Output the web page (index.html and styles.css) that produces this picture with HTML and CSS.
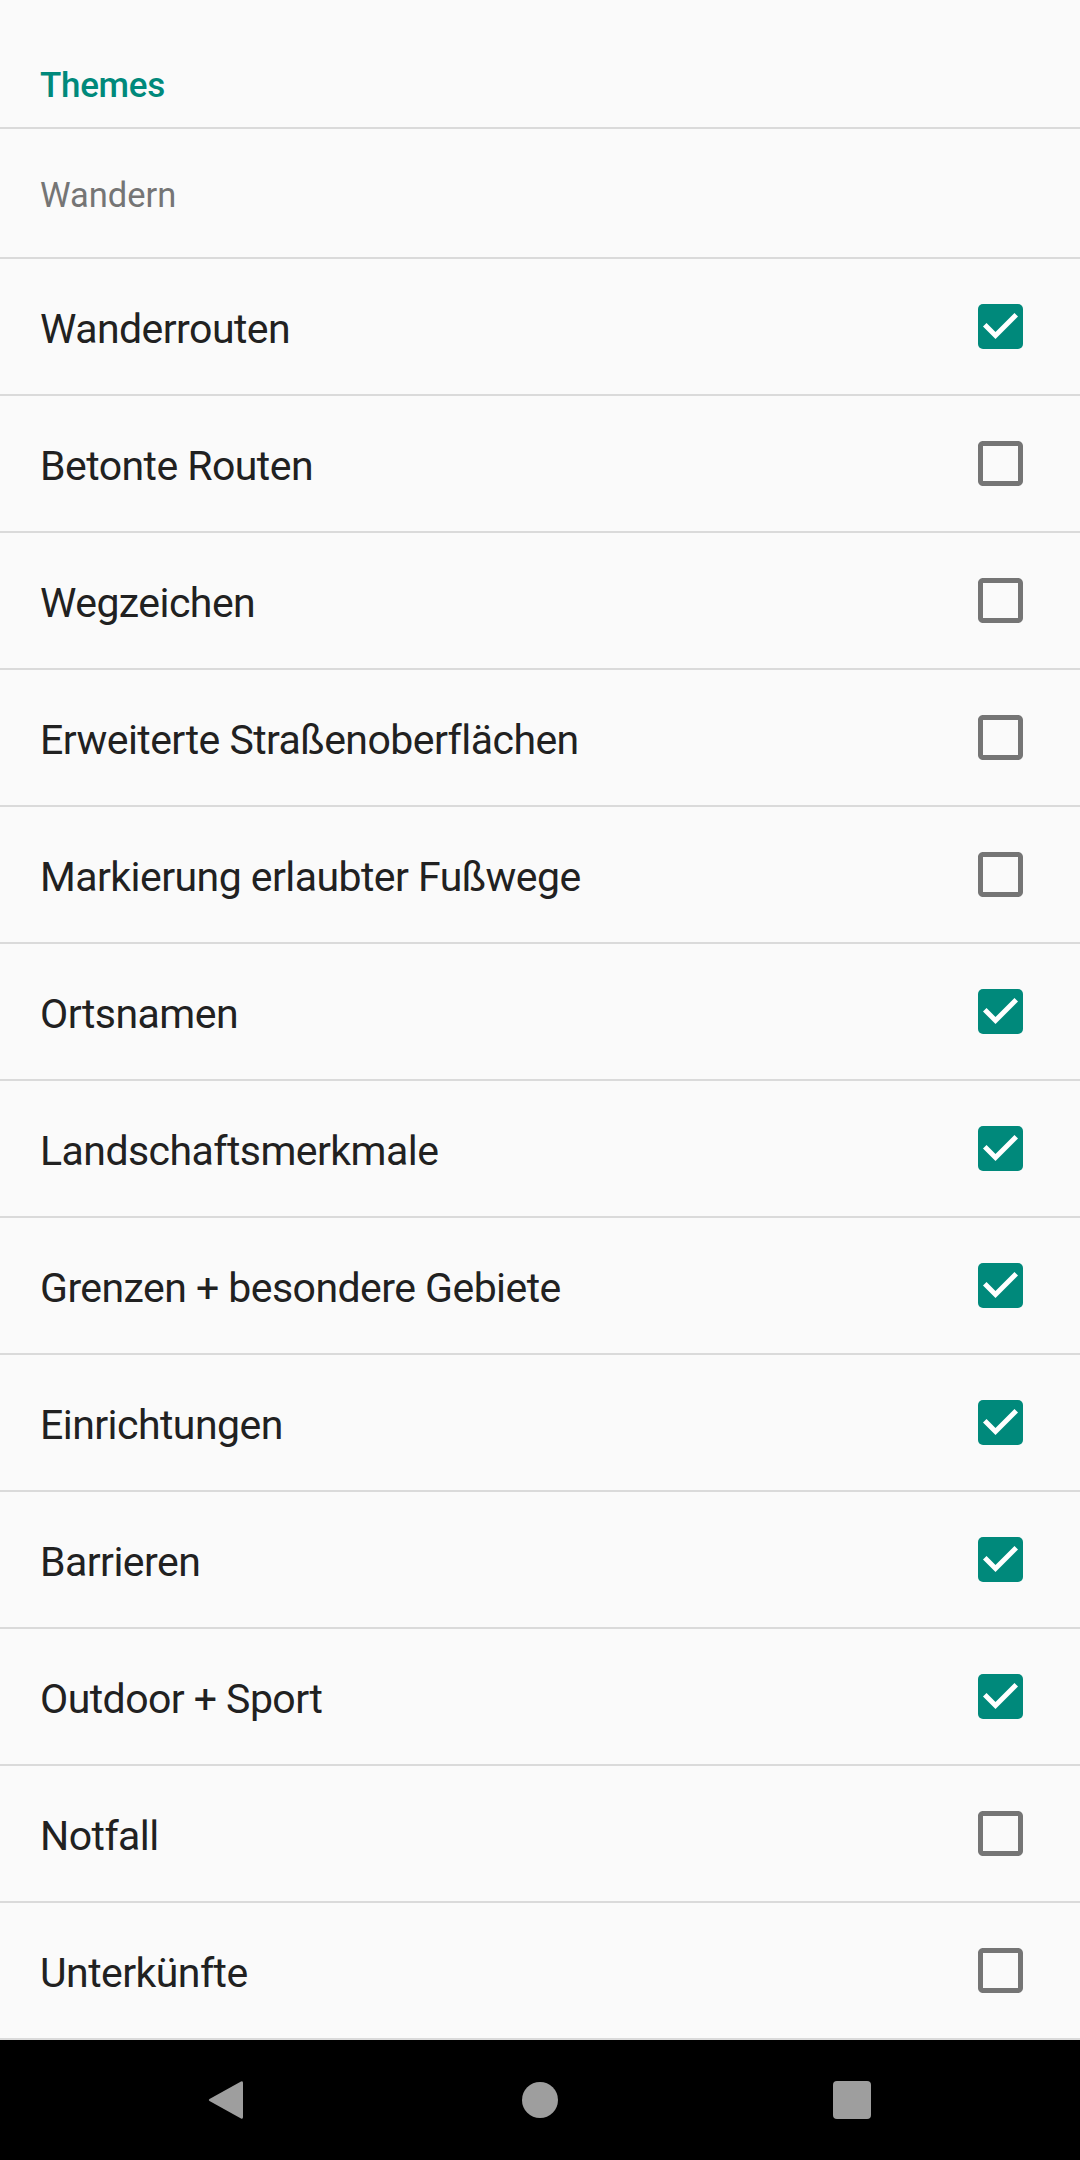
FILE: index.html
```html
<!DOCTYPE html>
<html lang="de">
<head>
<meta charset="utf-8">
<title>Themes</title>
<link rel="stylesheet" href="styles.css">
</head>
<body>
<div class="screen">
  <div class="list">
    <div class="category">Themes</div>
    <div class="subheader">Wandern</div>
    <div class="row"><span class="label">Wanderrouten</span><svg class="cb" viewBox="3 3 18 18"><rect x="3" y="3" width="18" height="18" rx="2" class="on"/><path class="tick" d="M10 17l-5-5 1.41-1.41L10 14.17l7.59-7.59L19 8l-9 9z"/></svg></div>
    <div class="row"><span class="label">Betonte Routen</span><svg class="cb" viewBox="3 3 18 18"><path class="off" d="M19 5v14H5V5h14m0-2H5c-1.11 0-2 .9-2 2v14c0 1.1.89 2 2 2h14c1.1 0 2-.9 2-2V5c0-1.1-.9-2-2-2z"/></svg></div>
    <div class="row"><span class="label">Wegzeichen</span><svg class="cb" viewBox="3 3 18 18"><path class="off" d="M19 5v14H5V5h14m0-2H5c-1.11 0-2 .9-2 2v14c0 1.1.89 2 2 2h14c1.1 0 2-.9 2-2V5c0-1.1-.9-2-2-2z"/></svg></div>
    <div class="row"><span class="label">Erweiterte Straßenoberflächen</span><svg class="cb" viewBox="3 3 18 18"><path class="off" d="M19 5v14H5V5h14m0-2H5c-1.11 0-2 .9-2 2v14c0 1.1.89 2 2 2h14c1.1 0 2-.9 2-2V5c0-1.1-.9-2-2-2z"/></svg></div>
    <div class="row"><span class="label">Markierung erlaubter Fußwege</span><svg class="cb" viewBox="3 3 18 18"><path class="off" d="M19 5v14H5V5h14m0-2H5c-1.11 0-2 .9-2 2v14c0 1.1.89 2 2 2h14c1.1 0 2-.9 2-2V5c0-1.1-.9-2-2-2z"/></svg></div>
    <div class="row"><span class="label">Ortsnamen</span><svg class="cb" viewBox="3 3 18 18"><rect x="3" y="3" width="18" height="18" rx="2" class="on"/><path class="tick" d="M10 17l-5-5 1.41-1.41L10 14.17l7.59-7.59L19 8l-9 9z"/></svg></div>
    <div class="row"><span class="label">Landschaftsmerkmale</span><svg class="cb" viewBox="3 3 18 18"><rect x="3" y="3" width="18" height="18" rx="2" class="on"/><path class="tick" d="M10 17l-5-5 1.41-1.41L10 14.17l7.59-7.59L19 8l-9 9z"/></svg></div>
    <div class="row"><span class="label">Grenzen + besondere Gebiete</span><svg class="cb" viewBox="3 3 18 18"><rect x="3" y="3" width="18" height="18" rx="2" class="on"/><path class="tick" d="M10 17l-5-5 1.41-1.41L10 14.17l7.59-7.59L19 8l-9 9z"/></svg></div>
    <div class="row"><span class="label">Einrichtungen</span><svg class="cb" viewBox="3 3 18 18"><rect x="3" y="3" width="18" height="18" rx="2" class="on"/><path class="tick" d="M10 17l-5-5 1.41-1.41L10 14.17l7.59-7.59L19 8l-9 9z"/></svg></div>
    <div class="row"><span class="label">Barrieren</span><svg class="cb" viewBox="3 3 18 18"><rect x="3" y="3" width="18" height="18" rx="2" class="on"/><path class="tick" d="M10 17l-5-5 1.41-1.41L10 14.17l7.59-7.59L19 8l-9 9z"/></svg></div>
    <div class="row"><span class="label">Outdoor + Sport</span><svg class="cb" viewBox="3 3 18 18"><rect x="3" y="3" width="18" height="18" rx="2" class="on"/><path class="tick" d="M10 17l-5-5 1.41-1.41L10 14.17l7.59-7.59L19 8l-9 9z"/></svg></div>
    <div class="row"><span class="label">Notfall</span><svg class="cb" viewBox="3 3 18 18"><path class="off" d="M19 5v14H5V5h14m0-2H5c-1.11 0-2 .9-2 2v14c0 1.1.89 2 2 2h14c1.1 0 2-.9 2-2V5c0-1.1-.9-2-2-2z"/></svg></div>
    <div class="row"><span class="label">Unterkünfte</span><svg class="cb" viewBox="3 3 18 18"><path class="off" d="M19 5v14H5V5h14m0-2H5c-1.11 0-2 .9-2 2v14c0 1.1.89 2 2 2h14c1.1 0 2-.9 2-2V5c0-1.1-.9-2-2-2z"/></svg></div>
  </div>
  <div class="navbar">
    <svg class="nav-back" viewBox="0 0 35 40"><path d="M33 1.5 Q35 0.5 35 3 L35 37 Q35 39.5 33 38.5 L1.5 21 Q0 20 1.5 19 Z"/></svg>
    <span class="nav-home"></span>
    <span class="nav-recent"></span>
  </div>
</div>
</body>
</html>
```

FILE: styles.css
```css
html, body {
  margin: 0;
  padding: 0;
  background: #fafafa;
}

.screen {
  width: 1080px;
  height: 2160px;
  display: flex;
  flex-direction: column;
  font-family: Roboto, "Noto Sans", "Liberation Sans", sans-serif;
  background: #fafafa;
}

.list {
  flex: 1;
  display: flex;
  flex-direction: column;
}

.category {
  flex: none;
  height: 129px;
  box-sizing: border-box;
  padding: 65px 0 0 40px;
  font-size: 35px;
  letter-spacing: -0.3px;
  font-weight: 500;
  color: #00897b;
  border-bottom: 2px solid #dadada;
}

.subheader {
  flex: none;
  height: 130px;
  display: flex;
  align-items: center;
  box-sizing: border-box;
  padding: 3px 0 0 40px;
  font-size: 34.5px;
  color: #757575;
  border-bottom: 2px solid #dadada;
}

.row {
  flex: none;
  height: 135px;
  display: flex;
  align-items: center;
  justify-content: space-between;
  border-bottom: 2px solid #dadada;
  padding: 0 57px 0 40px;
}

.label {
  font-size: 41px;
  letter-spacing: -0.55px;
  color: #212121;
  padding-top: 5px;
}

.cb {
  width: 45px;
  height: 45px;
  display: block;
}

.cb .on {
  fill: #00897b;
}

.cb .tick {
  fill: #ffffff;
}

.cb .off {
  fill: #757575;
}

.navbar {
  flex: none;
  height: 120px;
  background: #000000;
  position: relative;
}

.nav-back {
  position: absolute;
  left: 208px;
  top: 40px;
  width: 35px;
  height: 40px;
  fill: #9e9e9e;
}

.nav-home {
  position: absolute;
  left: 522px;
  top: 42px;
  width: 36px;
  height: 36px;
  border-radius: 50%;
  background: #9e9e9e;
}

.nav-recent {
  position: absolute;
  left: 833px;
  top: 41px;
  width: 38px;
  height: 38px;
  border-radius: 4px;
  background: #9e9e9e;
}
```
